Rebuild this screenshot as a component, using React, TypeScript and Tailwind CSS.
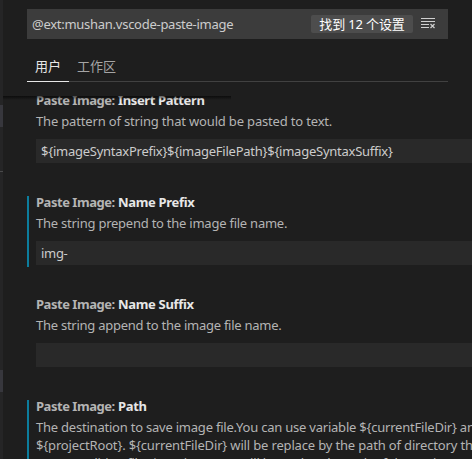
import type { ReactNode } from "react";

function Setting({ name, modified, children }: { name: ReactNode; modified?: boolean; children: ReactNode }) {
  return (
    <section className={`ml-[24px] h-[71px] shrink-0 border-l-2 pl-[7px] ${modified ? "border-[#0c7d9d]" : "border-transparent"}`}>
      <h3 className="flex h-[12px] items-center gap-[3px] text-[13px] font-bold whitespace-nowrap">
        <span className="w-[79px] tracking-[-0.47px] text-[#b4b4b4]">Paste Image:</span>
        {name}
      </h3>
      {children}
    </section>
  );
}

function Field({ children }: { children?: ReactNode }) {
  return (
    <div className="mt-[9px] flex h-[24px] items-center bg-[#292929] pl-[5px] whitespace-nowrap text-[#cccccc]">{children}</div>
  );
}

export default function App() {
  return (
    <div className="flex h-[459px] w-[472px] overflow-hidden bg-[#1e1e1e] font-['Noto_Sans','Noto_Sans_CJK_SC',sans-serif] text-[13px] leading-[18px] text-[#b4b4b4]">
      <aside className="flex w-[3px] shrink-0 flex-col bg-[#252526]">
        <div className="mt-[105px] h-[22px] bg-[#37373d]" />
        <div className="mt-[44px] h-px bg-[#4a4a4b]" />
        <div className="mt-[198px] h-[22px] bg-[#37373d]" />
      </aside>
      <main className="flex w-[469px] flex-col overflow-hidden">
        <header className="relative z-10 h-[96px] shrink-0 bg-[#1e1e1e] pt-[9px] pl-[24px]">
          <div className="flex h-[30px] w-[421px] items-center bg-[#3c3c3c] pl-[5px] text-[#cccccc]">
            <span className="w-[279px] tracking-[-0.27px] whitespace-nowrap">@ext:mushan.vscode-paste-image</span>
            <span className="flex h-[18px] w-[102px] items-center justify-center rounded-[2px] bg-[#4d4d4d] tracking-[-0.15px] whitespace-nowrap text-white">找到 12 个设置</span>
            <svg className="mb-[2px] ml-[8px]" width="14" height="12" viewBox="0 0 14 12" fill="none" stroke="#d0d0d0">
              <path d="M0 1.5h14M0 4.5h14M0 7.5h8M0 10.5h8" />
              <path d="M9.5 7l4 4M13.5 7l-4 4" strokeWidth="1.2" />
            </svg>
          </div>
          <nav className="mt-[13px] flex h-[30px] w-[421px] border-b border-[#414141]">
            <div className="h-[30px] w-[42px] border-b border-[#e7e7e7] pt-[5px] pl-[8px] text-[#e7e7e7]">用户</div>
            <div className="pt-[5px] pl-[8px] text-[#a5a5a5]">工作区</div>
          </nav>
          <div className="absolute top-[96px] left-0 h-[4px] w-[228px] bg-linear-to-b from-black/60 to-transparent" />
        </header>
        <div className="-mt-[2px] flex w-[520px] flex-col gap-[31px]">
          <Setting name={<span className="tracking-[-0.38px] text-[#e7e7e7]">Insert Pattern</span>}>
            <p className="mt-[6px] tracking-[-0.17px] whitespace-nowrap">The pattern of string that would be pasted to text.</p>
            <Field><span className="tracking-[-0.25px]">{"${imageSyntaxPrefix}${imageFilePath}${imageSyntaxSuffix}"}</span></Field>
          </Setting>
          <Setting modified name={<span className="tracking-[-0.32px] text-[#e7e7e7]">Name Prefix</span>}>
            <p className="mt-[6px] tracking-[-0.24px] whitespace-nowrap">The string prepend to the image file name.</p>
            <Field><span className="tracking-[-0.3px]">img-</span></Field>
          </Setting>
          <Setting name={<span className="tracking-[-0.32px] text-[#e7e7e7]">Name Suffix</span>}>
            <p className="mt-[6px] tracking-[-0.26px] whitespace-nowrap">The string append to the image file name.</p>
            <Field />
          </Setting>
          <Setting modified name={<span className="tracking-[-0.32px] text-[#e7e7e7]">Path</span>}>
            <p className="mt-[6px] tracking-[-0.22px] whitespace-nowrap">{"The destination to save image file.You can use variable ${currentFileDir} and"}</p>
            <p className="tracking-[-0.16px] whitespace-nowrap">{"${projectRoot}. ${currentFileDir} will be replace by the path of directory that"}</p>
            <p className="tracking-[-0.2px] whitespace-nowrap">{"current editing file. ${projectRoot} will be replace by path of the project"}</p>
          </Setting>
        </div>
      </main>
    </div>
  );
}
